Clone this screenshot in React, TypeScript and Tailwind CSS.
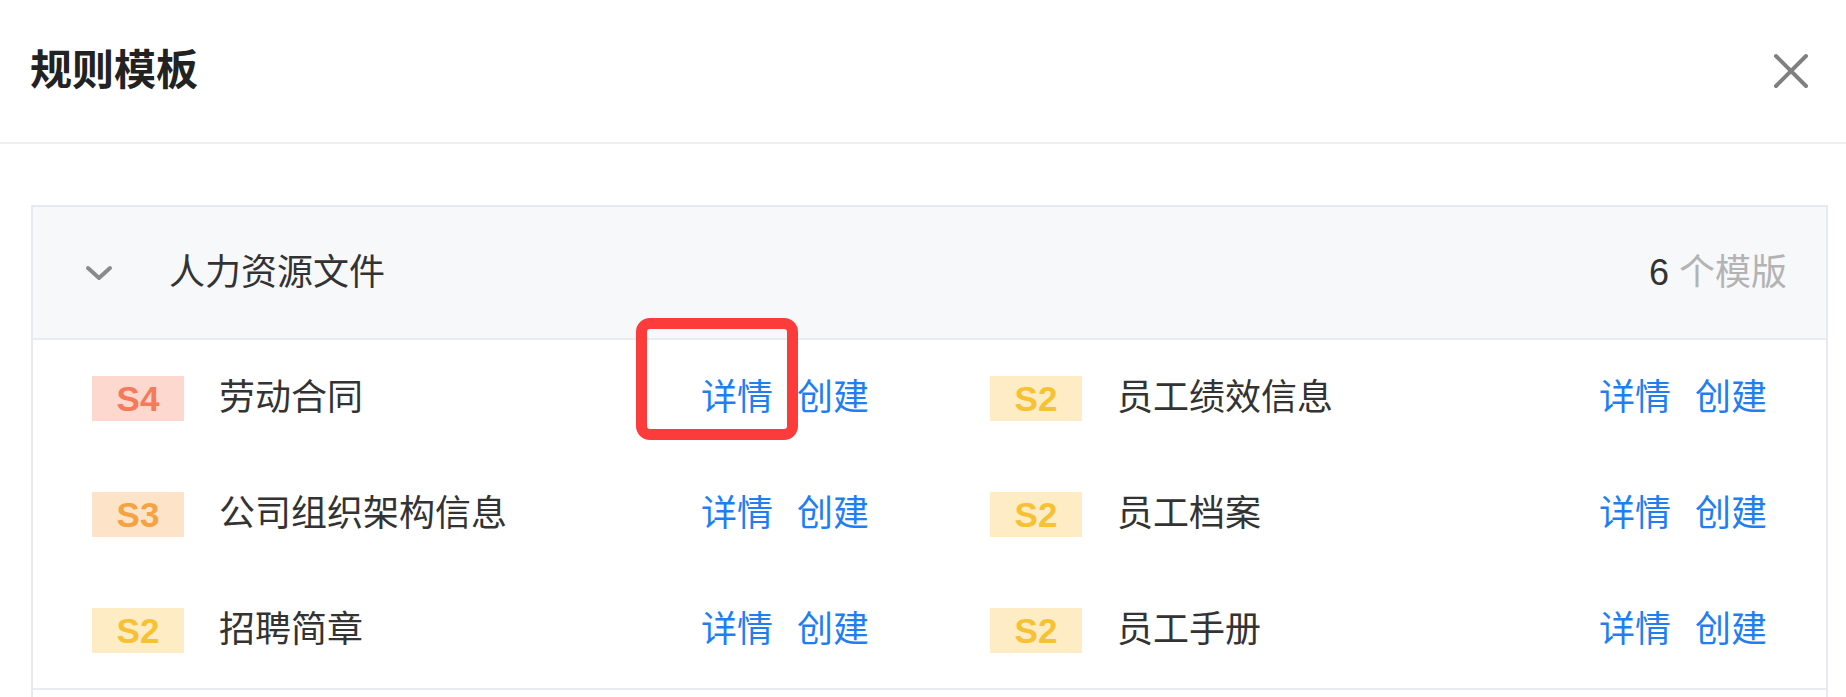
const rows = [
  [
    { level: 'S4', name: '劳动合同' },
    { level: 'S2', name: '员工绩效信息' },
  ],
  [
    { level: 'S3', name: '公司组织架构信息' },
    { level: 'S2', name: '员工档案' },
  ],
  [
    { level: 'S2', name: '招聘简章' },
    { level: 'S2', name: '员工手册' },
  ],
];

const badgeStyles: Record<string, string> = {
  S4: 'bg-[#fcd8cf] text-[#f47a5a]',
  S3: 'bg-[#fde4c9] text-[#f5a242]',
  S2: 'bg-[#feedc4] text-[#f7c136]',
};

function Badge({ level }: { level: string }) {
  return (
    <div
      className={`w-[92px] h-[45px] shrink-0 flex items-center justify-center text-[35px] font-bold leading-none ${badgeStyles[level]}`}
      style={{ fontFamily: '"Liberation Sans", Arial, sans-serif' }}
    >
      {level}
    </div>
  );
}

function TemplateItem({ level, name }: { level: string; name: string }) {
  return (
    <div className="h-[116px] flex items-center">
      <Badge level={level} />
      <span className="ml-[35px] flex-1 text-[36px] leading-none text-[#333]">{name}</span>
      <div className="flex items-center gap-[24px] text-[36px] leading-none text-[#1f7ff2]">
        <span>详情</span>
        <span>创建</span>
      </div>
    </div>
  );
}

export default function App() {
  return (
    <div
      className="relative w-[1846px] h-[697px] overflow-hidden bg-white"
      style={{ fontFamily: '"Liberation Sans", "Noto Sans CJK SC", sans-serif' }}
    >
      <div className="h-[144px] flex items-center justify-between pl-[30px] pr-[37px] border-b-2 border-[#eceef2]">
        <h1 className="text-[42px] font-bold leading-none text-[#222]">规则模板</h1>
        <svg width="36" height="36" viewBox="0 0 36 36" fill="none">
          <path d="M3 3 L33 33 M33 3 L3 33" stroke="#808080" strokeWidth="4" strokeLinecap="round" />
        </svg>
      </div>

      <div className="ml-[31px] mr-[18px] mt-[61px] border-2 border-[#e6e9ef]">
        <div className="h-[133px] flex items-center bg-[#f7f8fa] border-b-2 border-[#e8ebf0] pl-[52px] pr-[39px]">
          <svg width="28" height="16" viewBox="0 0 28 16" fill="none">
            <path d="M3 3 L14 13 L25 3" stroke="#8a8a8a" strokeWidth="4" strokeLinecap="round" strokeLinejoin="round" />
          </svg>
          <span className="ml-[56px] flex-1 text-[36px] leading-none text-[#333]">人力资源文件</span>
          <span className="text-[36px] leading-none">
            <span className="text-[#333]">6</span>
            <span className="text-[#b3b3b3]"> 个模版</span>
          </span>
        </div>

        <div className="grid grid-cols-2 gap-x-[121px] px-[59px] border-b-2 border-[#e8ebf0]">
          {rows.flat().map((item, i) => (
            <TemplateItem key={i} level={item.level} name={item.name} />
          ))}
        </div>
        <div className="h-[100px]" />
      </div>

      <div className="absolute left-[636px] top-[318px] w-[162px] h-[122px] border-[11px] border-[#fc3b3b] rounded-[14px]" />
    </div>
  );
}
